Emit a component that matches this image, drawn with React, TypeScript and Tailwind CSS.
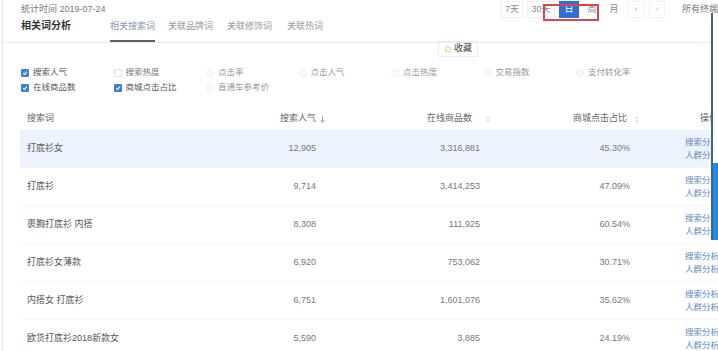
import React from "react";

const rows = [
  { word: "打底衫女", pop: "12,905", goods: "3,316,881", ratio: "45.30%" },
  { word: "打底衫", pop: "9,714", goods: "3,414,253", ratio: "47.09%" },
  { word: "裹胸打底衫 内搭", pop: "8,308", goods: "111,925", ratio: "60.54%" },
  { word: "打底衫女薄款", pop: "6,920", goods: "753,062", ratio: "30.71%" },
  { word: "内搭女 打底衫", pop: "6,751", goods: "1,601,076", ratio: "35.62%" },
  { word: "欧货打底衫2018新款女", pop: "5,590", goods: "3,885", ratio: "24.19%" },
];

const options = [
  { label: "搜索人气", state: "on" },
  { label: "搜索热度", state: "off" },
  { label: "点击率", state: "dis" },
  { label: "点击人气", state: "dis" },
  { label: "点击热度", state: "dis" },
  { label: "交易指数", state: "dis" },
  { label: "支付转化率", state: "dis" },
  { label: "在线商品数", state: "on" },
  { label: "商城点击占比", state: "on" },
  { label: "直通车参考价", state: "dis" },
];

function Check({ state }: { state: string }) {
  if (state === "on") {
    return (
      <span className="flex h-[8px] w-[8px] items-center justify-center rounded-[1px] bg-[#3f7fd8]">
        <svg width="6" height="6" viewBox="0 0 10 10">
          <path d="M2 5.2 L4.2 7.3 L8.2 2.8" stroke="#fff" strokeWidth="1.8" fill="none" />
        </svg>
      </span>
    );
  }
  if (state === "off") {
    return <span className="h-[8px] w-[8px] rounded-[1px] border border-[#e2e2e2] bg-white" />;
  }
  return <span className="h-[8px] w-[8px] rounded-full border border-[#f0f0f0] bg-[#fafafa]" />;
}

function SortIcon() {
  return (
    <svg width="4" height="7" viewBox="0 0 4 7">
      <path d="M2 0 L4 2.5 L0 2.5 Z M2 7 L4 4.5 L0 4.5 Z" fill="#dcdcdc" />
    </svg>
  );
}

export default function App() {
  const cols = "grid-cols-[210px_90px_164px_150px_1fr]";

  return (
    <div
      className="relative h-[351px] w-[718px] overflow-hidden bg-white pl-[2px] text-[#666]"
      style={{ fontFamily: '"Liberation Sans", "Noto Sans CJK SC", sans-serif' }}
    >
      <div className="h-full border-l border-[#e6e6e6]">
        {/* 顶部 */}
        <div className="border-b border-[#ececec]">
          <div className="flex h-[19px] items-center">
            <div className="w-[499px] pl-[18px] text-[9px] text-[#777]">统计时间 2019-07-24</div>
            <div className="flex items-center text-[9px] text-[#888]">
              <span className="flex h-[17px] w-[22px] items-center justify-center border border-[#f0f0f0]">7天</span>
              <span className="ml-[4px] flex h-[17px] w-[28px] items-center justify-center border border-[#f0f0f0]">30天</span>
              <span className="ml-[4px] flex h-[17px] w-[20px] items-center justify-center bg-[#2f6ed3] text-white">日</span>
              <span className="ml-[3px] flex h-[17px] w-[20px] items-center justify-center">周</span>
              <span className="ml-[3px] flex h-[17px] w-[18px] items-center justify-center">月</span>
              <span className="ml-[4px] flex h-[17px] w-[18px] items-center justify-center border border-[#f2f2f2] text-[#aaa]">‹</span>
              <span className="ml-[4px] flex h-[17px] w-[16px] items-center justify-center border border-[#f2f2f2] text-[#ccc]">›</span>
              <span className="ml-[17px] whitespace-nowrap text-[#777]">所有终端</span>
            </div>
          </div>
          <div className="flex h-[23px] items-stretch">
            <div className="w-[107px] pl-[18px] pt-[1px] text-[10px] leading-[12px] font-bold text-[#333]">相关词分析</div>
            <div className="flex h-full text-[9px] leading-[12px] text-[#999]">
              <span className="h-full border-b-2 border-[#5a6470] pt-[1px] text-[#7f96b3]">相关搜索词</span>
              <span className="ml-[13px] h-full border-b-2 border-transparent pt-[1px]">关联品牌词</span>
              <span className="ml-[14px] h-full border-b-2 border-transparent pt-[1px]">关联修饰词</span>
              <span className="ml-[15px] h-full border-b-2 border-transparent pt-[1px]">关联热词</span>
            </div>
          </div>
        </div>

        {/* 收藏 */}
        <div className="flex h-[15px] items-start pl-[435px]">
          <span className="-mt-[2px] flex h-[16px] items-center gap-[2px] border border-[#ececec] px-[5px] text-[9px] text-[#444]">
            <svg width="8" height="8" viewBox="0 0 24 24">
              <path
                d="M12 2 L15 8.6 L22 9.3 L16.8 14 L18.2 21 L12 17.4 L5.8 21 L7.2 14 L2 9.3 L9 8.6 Z"
                fill="none"
                stroke="#f2c744"
                strokeWidth="2"
              />
            </svg>
            收藏
          </span>
        </div>

        {/* 指标选择 */}
        <div className="mt-[7px] grid grid-cols-[repeat(7,92.5px)] pl-[18px]">
          {options.map((o) => (
            <div key={o.label} className="flex h-[15px] items-center gap-[4px] text-[8.5px]">
              <Check state={o.state} />
              <span className={o.state === "on" ? "text-[#555]" : o.state === "off" ? "text-[#777]" : "text-[#999]"}>
                {o.label}
              </span>
            </div>
          ))}
        </div>

        {/* 表格 */}
        <div className="ml-[17px] mt-[13px]">
          <div className={`grid ${cols} h-[22px] items-center text-[9px] text-[#666]`}>
            <div className="pl-[7px]">搜索词</div>
            <div className="-mr-[5px] flex items-center justify-end gap-[4px]">
              搜索人气
              <svg width="5" height="7" viewBox="0 0 5 7">
                <path d="M2.5 0 V6 M0.5 4 L2.5 6.5 L4.5 4" stroke="#8aa0bd" strokeWidth="0.9" fill="none" />
              </svg>
            </div>
            <div className="-mr-[6px] flex items-center justify-end gap-[14px]">
              在线商品数
              <SortIcon />
            </div>
            <div className="-mr-[5px] flex items-center justify-end gap-[8px]">
              商城点击占比
              <SortIcon />
            </div>
            <div className="pl-[66px] whitespace-nowrap">操作</div>
          </div>
          {rows.map((r, i) => (
            <div
              key={r.word}
              className={`grid ${cols} h-[38px] items-center border-b border-[#f7f7f7] text-[9px] ${
                i === 0 ? "bg-[#edf3fc]" : ""
              }`}
            >
              <div className="pl-[7px] text-[#555]">{r.word}</div>
              <div className="pr-[4px] text-right text-[#777]">{r.pop}</div>
              <div className="pr-[4px] text-right text-[#777]">{r.goods}</div>
              <div className="pr-[4px] text-right text-[#777]">{r.ratio}</div>
              <div className="pl-[51px] text-[8.5px] leading-[13px] whitespace-nowrap text-[#5b86c7]">
                <div>搜索分析</div>
                <div>人群分析</div>
              </div>
            </div>
          ))}
        </div>
      </div>

      {/* 标注框 */}
      <div className="absolute left-[543px] top-[4px] h-[17px] w-[56px] border-2 border-[#d5484e]" />

      {/* 右侧浮窗 */}
      <div className="absolute left-[711px] top-[13px] flex h-[227px] w-[10px] flex-col border-l-2 border-[#45648a]">
        <div className="h-[150px] bg-white" />
        <div className="flex-1 bg-[#1f8ae6]" />
      </div>
    </div>
  );
}
